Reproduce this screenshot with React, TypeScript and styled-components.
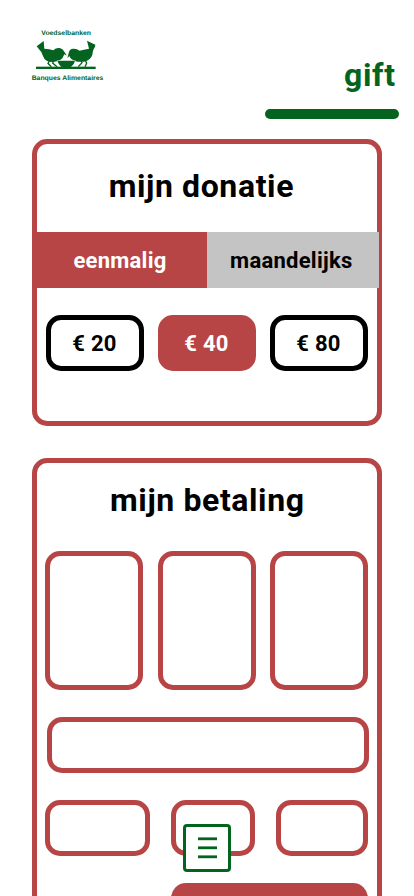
import React from "react";
import styled, { createGlobalStyle } from "styled-components";

const red = "#b84545";
const green = "#056320";

const GlobalStyle = createGlobalStyle`
  *, *::before, *::after { box-sizing: border-box; }
  html, body { margin: 0; padding: 0; background: #fff; }
  body { font-family: Roboto, "Liberation Sans", sans-serif; color: #000; }
  button { font: inherit; color: inherit; padding: 0; margin: 0; }
`;

const Page = styled.div`
  width: 414px;
  height: 896px;
  overflow: hidden;
  background: #fff;
`;

const Header = styled.header`
  display: flex;
  justify-content: space-between;
  height: 139px;
  padding: 22px 15px 0 24px;
`;

const Logo = styled.svg`
  display: block;
  width: 90px;
  height: 66px;
  fill: ${green};
  font: bold 20px "Liberation Sans", sans-serif;
  text-rendering: geometricPrecision;
`;

const Nav = styled.nav`
  display: flex;
  flex-direction: column;
  align-items: flex-end;
  width: 134px;
  padding-top: 34px;
`;

const NavLabel = styled.a`
  height: 53px;
  padding-right: 3.4px;
  color: ${green};
  font-size: 32px;
  font-weight: 700;
  line-height: 38px;
  letter-spacing: 0.64px;
`;

const NavBar = styled.span`
  width: 134px;
  height: 10px;
  border-radius: 5px;
  background: ${green};
`;

const Main = styled.main`
  display: flex;
  flex-direction: column;
  gap: 32px;
  padding: 0 32px;
`;

const Card = styled.section<{ $height: number }>`
  flex: none;
  width: 350px;
  height: ${({ $height }) => $height}px;
  border: 5px solid ${red};
  border-radius: 15px;
`;

const CardTitle = styled.h2<{ $top: number; $left: number }>`
  height: 88px;
  margin: 0;
  padding: ${({ $top }) => $top}px 0 0 ${({ $left }) => $left}px;
  font-size: 32px;
  font-weight: 700;
  line-height: 38px;
  letter-spacing: 0.6px;
`;

const Segments = styled.div`
  display: grid;
  grid-template-columns: 170px 171.6px;
  height: 56px;
`;

const Segment = styled.button<{ $active?: boolean }>`
  border: 0;
  background: ${({ $active }) => ($active ? red : "#c4c4c4")};
  color: ${({ $active }) => ($active ? "#fff" : "#000")};
  font-size: 22px;
  font-weight: 700;
  letter-spacing: 0.25px;
  padding-right: ${({ $active }) => ($active ? 4 : 3)}px;
`;

const Amounts = styled.div`
  display: grid;
  grid-template-columns: repeat(3, 98px);
  gap: 14px;
  padding: 27px 0 0 9px;
`;

const Amount = styled.button<{ $active?: boolean }>`
  height: 56px;
  border: 5px solid ${({ $active }) => ($active ? red : "#000")};
  border-radius: 15px;
  background: ${({ $active }) => ($active ? red : "#fff")};
  color: ${({ $active }) => ($active ? "#fff" : "#000")};
  font-size: 22px;
  font-weight: 700;
  letter-spacing: 0.3px;
  padding-right: 1px;
`;

const Payment = styled.div`
  display: flex;
  flex-direction: column;
  gap: 27px;
  width: 331px;
  padding-left: 8px;
`;

const Row = styled.div<{ $columns: string; $inset?: number }>`
  display: grid;
  grid-template-columns: ${({ $columns }) => $columns};
  width: ${({ $inset }) => ($inset ? 322 : 323)}px;
  margin-left: ${({ $inset = 0 }) => $inset}px;
`;

const Field = styled.div<{ $height?: number }>`
  height: ${({ $height = 56 }) => $height}px;
  border: 5px solid ${red};
  border-radius: 15px;
`;

const Tiles = styled(Row)`
  column-gap: 14px;

  > :first-child { margin-right: 1px; }
`;

const SmallFields = styled(Row)`
  column-gap: 21px;
`;

const Submit = styled.button`
  align-self: flex-end;
  width: 197px;
  height: 56px;
  border: 0;
  border-radius: 15px;
  background: ${red};
`;

const MenuButton = styled.button`
  position: fixed;
  left: 183px;
  top: 824px;
  display: flex;
  width: 48px;
  height: 48px;
  border: 3px solid ${green};
  border-radius: 4px;
  background: #fff;
`;

const MenuIcon = styled.svg`
  width: 42px;
  height: 42px;
  fill: ${green};
`;

const amounts = [20, 40, 80];

function BirdsLogo() {
  return (
    <Logo viewBox="0 0 270 198" role="img" aria-label="Voedselbanken">
      <text x="52" y="39" textLength="149" lengthAdjust="spacingAndGlyphs">Voedselbanken</text>
      <path d="M38 73 L59 57 L61 80 Q76 80 88 85 Q95 77 107 78 Q117 80 120 88 L125 95 L128 101 L121 97 Q118 104 115 109 Q105 119 87 120 Q63 121 57 102 Q54 90 45 82 Z" />
      <path d="M214 68 L189 56 L195 80 Q178 83 167 86 Q158 79 147 80 Q137 81 135 90 L130 109 L136 102 Q139 112 151 116 Q163 121 180 119 Q200 115 205 98 Q207 81 213 75 Z" />
      <path d="M76 117 L72 124 L82 134 M89 117 L86 123 L99 134 M171 116 L174 122 L163 134 M184 116 L188 123 L183 134" fill="none" stroke={green} strokeWidth="4" />
      <path d="M100 116 H153 Q150 128 143 133 L139 136 H114 L110 133 Q104 127 100 116Z" stroke="#fff" strokeWidth="2" paintOrder="stroke" />
      <rect x="36" y="134" width="179" height="7" />
      <text x="23" y="174" textLength="215" lengthAdjust="spacingAndGlyphs">Banques Alimentaires</text>
    </Logo>
  );
}

export default function App() {
  return (
    <>
      <GlobalStyle />
      <Page>
        <Header>
          <BirdsLogo />
          <Nav>
            <NavLabel>gift</NavLabel>
            <NavBar />
          </Nav>
        </Header>
        <Main>
          <Card $height={287}>
            <CardTitle $top={23} $left={71.7}>mijn donatie</CardTitle>
            <Segments>
              <Segment $active>eenmalig</Segment>
              <Segment>maandelijks</Segment>
            </Segments>
            <Amounts>
              {amounts.map((amount) => (
                <Amount key={amount} $active={amount === 40}>
                  € {amount}
                </Amount>
              ))}
            </Amounts>
          </Card>
          <Card $height={520}>
            <CardTitle $top={18} $left={73}>mijn betaling</CardTitle>
            <Payment>
              <Tiles $columns="99px 98px 98px">
                <Field $height={139} />
                <Field $height={139} />
                <Field $height={139} />
              </Tiles>
              <Row $columns="1fr" $inset={2}>
                <Field />
              </Row>
              <SmallFields $columns="105px 84px 92px">
                <Field />
                <Field />
                <Field />
              </SmallFields>
              <Submit aria-label="doneren" />
            </Payment>
          </Card>
        </Main>
        <MenuButton aria-label="menu">
          <MenuIcon viewBox="0 0 42 42">
            <rect x="12" y="10.4" width="19" height="2.8" />
            <rect x="12" y="19.4" width="19" height="2.8" />
            <rect x="12" y="28.4" width="19" height="2.8" />
          </MenuIcon>
        </MenuButton>
      </Page>
    </>
  );
}
